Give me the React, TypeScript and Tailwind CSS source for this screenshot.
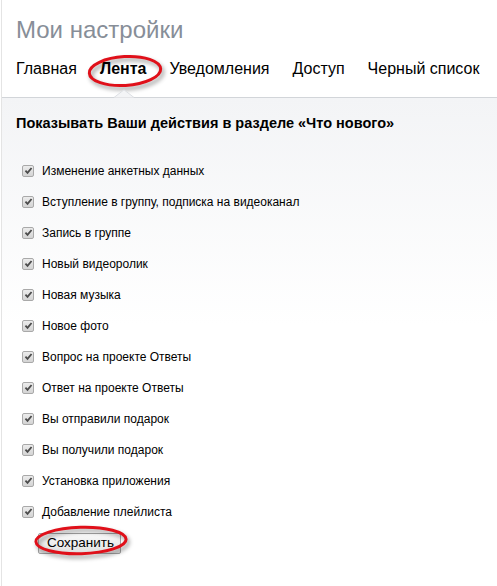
import { Fragment } from "react";

const tabs = ["Главная", "Лента", "Уведомления", "Доступ", "Черный список"];

const items = [
  "Изменение анкетных данных",
  "Вступление в группу, подписка на видеоканал",
  "Запись в группе",
  "Новый видеоролик",
  "Новая музыка",
  "Новое фото",
  "Вопрос на проекте Ответы",
  "Ответ на проекте Ответы",
  "Вы отправили подарок",
  "Вы получили подарок",
  "Установка приложения",
  "Добавление плейлиста",
];

function CheckBox() {
  return (
    <span className="flex h-[12px] w-[12px] shrink-0 items-center justify-center rounded-[2px] border border-[#a9a9a9] bg-gradient-to-b from-[#ececec] to-[#d4d4d4]">
      <svg viewBox="0 0 10 10" className="h-[9px] w-[9px]">
        <path d="M1.6 5.2 L3.9 7.6 L8.4 2.2" fill="none" stroke="#4b4b4b" strokeWidth="2" />
      </svg>
    </span>
  );
}

function RedLoop({ className, rotate }: { className: string; rotate: number }) {
  return (
    <svg
      viewBox="0 0 100 40"
      preserveAspectRatio="none"
      className={`pointer-events-none absolute drop-shadow-[2px_3px_2px_rgba(0,0,0,0.4)] ${className}`}
    >
      <ellipse
        cx="50"
        cy="20"
        rx="47"
        ry="17"
        fill="none"
        stroke="#e0101a"
        strokeWidth="3"
        vectorEffect="non-scaling-stroke"
        transform={`rotate(${rotate} 50 20)`}
      />
    </svg>
  );
}

export default function App() {
  return (
    <div className="ml-px min-h-[586px] w-[496px] border-l border-[#e4e4e4] bg-white font-['Liberation_Sans',Arial,sans-serif]">
      <div className="px-[14px] pt-[15px]">
        <h1 className="text-[24px] leading-[30px] text-[#878e98]">Мои настройки</h1>
      </div>

      <nav className="relative mt-[14px] border-b border-[#d2d5d9] pb-[18px] pl-[14px]">
        <div className="flex gap-[23px] text-[16px] leading-[20px] text-black">
          {tabs.map((t) => (
            <Fragment key={t}>
              {t === "Лента" ? (
                <span className="relative font-bold">
                  {t}
                  <RedLoop className="-left-[13px] -top-[5px] h-[34px] w-[76px]" rotate={-3} />
                </span>
              ) : (
                <span>{t}</span>
              )}
            </Fragment>
          ))}
        </div>
        <svg viewBox="0 0 20 9" className="absolute bottom-[-1px] left-[112px] h-[9px] w-[20px]">
          <path d="M0 8.5 L10 0.8 L20 8.5" fill="#f3f4f6" stroke="#dcdfe3" strokeWidth="1" />
        </svg>
      </nav>

      <div className="bg-gradient-to-b from-[#f3f4f6] via-white to-white px-[14px] pt-[16px]">
        <h2 className="text-[14.5px] font-bold leading-[18px] text-black">
          Показывать Ваши действия в разделе «Что нового»
        </h2>

        <ul className="mt-[23px] pl-[6px]">
          {items.map((label) => (
            <li key={label} className="flex h-[31px] items-center gap-[8px] text-[12px] text-black">
              <CheckBox />
              <span className="pt-px">{label}</span>
            </li>
          ))}
        </ul>

        <div className="mt-[3px] pl-[22px]">
          <span className="relative inline-block">
            <button
              type="button"
              className="h-[21px] rounded-[2px] border border-[#a4a4a4] bg-gradient-to-b from-[#fafafa] to-[#e2e2e2] pl-[8px] pr-[6px] text-[13.5px] leading-[18px] text-black"
            >
              Сохранить
            </button>
            <RedLoop className="-left-[5px] -top-[5px] h-[31px] w-[96px]" rotate={-2} />
          </span>
        </div>
      </div>
    </div>
  );
}
